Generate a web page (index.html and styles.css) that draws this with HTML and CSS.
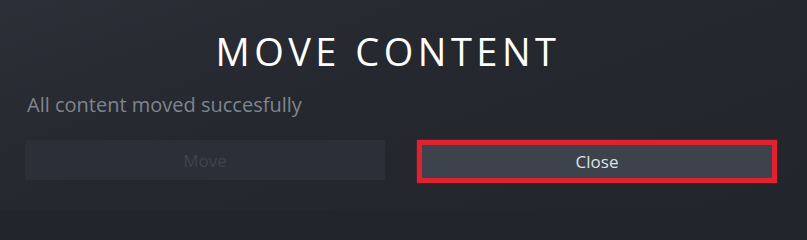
FILE: index.html
```html
<!DOCTYPE html>
<html>
<head>
<meta charset="utf-8">
<link rel="stylesheet" href="styles.css">
</head>
<body>
<div class="dialog">
  <h1 class="title">MOVE CONTENT</h1>
  <p class="status">All content moved succesfully</p>
  <div class="actions">
    <button class="btn btn-disabled">Move</button>
    <button class="btn btn-close">Close</button>
  </div>
</div>
</body>
</html>
```
FILE: styles.css
```css
html, body {
  margin: 0;
  padding: 0;
}
html {
  background: #22252c;
}
body {
  width: 807px;
  height: 210px;
  overflow: hidden;
  background: linear-gradient(160deg, #2c2f37 0%, #25282f 40%, #22252c 100%);
  font-family: "Open Sans", "Noto Sans", sans-serif;
}
.dialog {
  padding: 25px 30px 0 25px;
}
.title {
  margin: 0;
  padding-right: 26px;
  text-align: center;
  font-size: 38px;
  font-weight: 400;
  letter-spacing: 4.5px;
  line-height: 52px;
  color: #ffffff;
}
.status {
  margin: 14px 0 0 2px;
  font-size: 20px;
  line-height: 28px;
  color: #7f858d;
}
.actions {
  margin-top: 21px;
  display: grid;
  grid-template-columns: 360px 360px;
  column-gap: 32px;
}
.btn {
  font-family: "Open Sans", "Noto Sans", sans-serif;
  font-size: 17px;
  border: none;
  padding: 0;
  cursor: default;
}
.btn-disabled {
  height: 40px;
  background: #2b2f37;
  color: #3e434c;
}
.btn-close {
  height: 43px;
  background: #3d424d;
  color: #dde1e5;
  border: 5px solid #de2230;
  box-shadow: 0 0 2px rgba(222, 34, 48, 0.6);
}
```
